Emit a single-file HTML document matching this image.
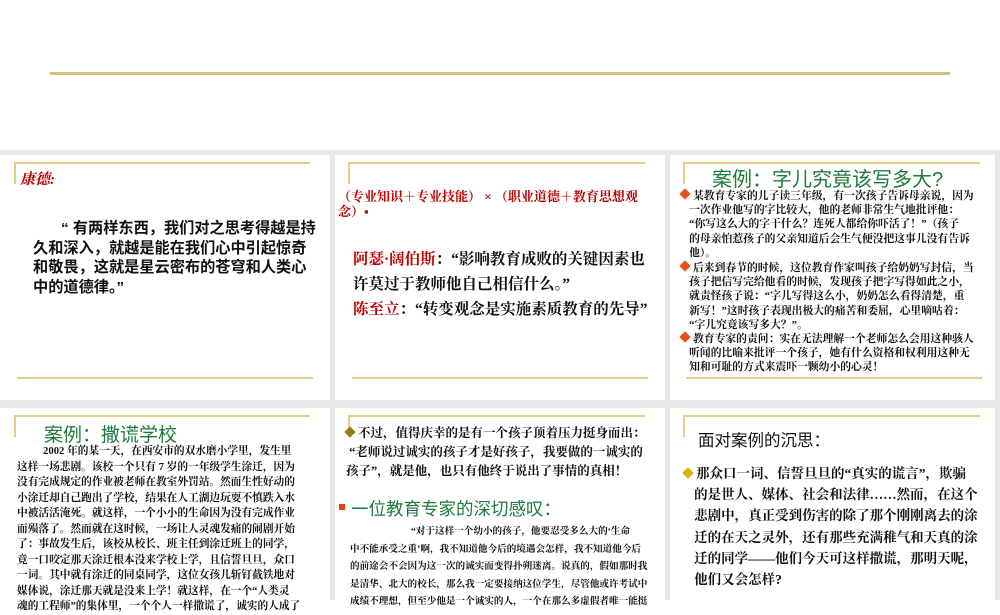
<!DOCTYPE html>
<html><head><meta charset="utf-8"><style>
*{margin:0;padding:0;box-sizing:border-box}
body{width:1000px;height:600px;position:relative;overflow:hidden;background:#fff;font-family:"Liberation Serif","Noto Serif CJK SC",serif}
.a{position:absolute;white-space:nowrap}
.gray{position:absolute;left:0;top:150px;width:1000px;height:450px;background:#e8e8e8}
.p{position:absolute;background:#fff}
.hl{position:absolute;height:2px;background:#e3cf8a}
.vl{position:absolute;width:2px;height:22px;background:#e3cf8a}
.sans{font-family:"Liberation Sans","Noto Sans CJK SC",sans-serif}
.red{color:#c00000}
.green{color:#1d7a3a}
.dia{display:inline-block;width:8px;height:8px;transform:rotate(45deg);margin-right:4px;vertical-align:1px}
</style></head><body>
<div class="a" style="left:50px;top:72px;width:900px;height:3px;background:#d9c070"></div>
<div class="gray"></div>
<div class="p" style="left:0;top:155px;width:330px;height:245px"></div>
<div class="p" style="left:335px;top:155px;width:330px;height:245px"></div>
<div class="p" style="left:670px;top:155px;width:325px;height:245px"></div>
<div class="p" style="left:0;top:408px;width:330px;height:192px"></div>
<div class="p" style="left:335px;top:408px;width:330px;height:192px"></div>
<div class="p" style="left:670px;top:408px;width:325px;height:192px"></div>

<div class="hl" style="left:14px;top:162px;width:296px"></div><div class="vl" style="left:14px;top:162px"></div>
<div class="hl" style="left:17px;top:377px;width:296px"></div>
<div class="hl" style="left:348px;top:162px;width:297px"></div><div class="vl" style="left:348px;top:162px"></div>
<div class="hl" style="left:352px;top:377px;width:296px"></div>
<div class="hl" style="left:683px;top:162px;width:297px"></div><div class="vl" style="left:683px;top:162px"></div>
<div class="hl" style="left:686px;top:377px;width:296px"></div>
<div class="hl" style="left:14px;top:415px;width:296px"></div><div class="vl" style="left:14px;top:415px"></div>
<div class="hl" style="left:348px;top:415px;width:297px"></div><div class="vl" style="left:348px;top:415px"></div>
<div class="hl" style="left:683px;top:415px;width:297px"></div><div class="vl" style="left:683px;top:415px"></div>

<!-- panel 1 -->
<div class="a red" style="left:20px;top:168px;font-size:15px;font-weight:bold;font-style:italic">康德:</div>
<div class="a sans" style="left:33px;top:219px;font-size:15.2px;font-weight:bold;line-height:19.5px;color:#111">
<span style="padding-left:28px">“ 有两样东西，我们对之思考得越是持</span><br>久和深入，就越是能在我们心中引起惊奇<br>和敬畏，这就是星云密布的苍穹和人类心<br>中的道德律。”</div>

<!-- panel 2 -->
<div class="a red" style="left:338px;top:189px;font-size:13px;font-weight:bold;line-height:15px">（专业知识＋专业技能） × （职业道德＋教育思想观<br>念）▪</div>
<div class="a" style="left:353px;top:247px;font-size:15.5px;font-weight:bold;line-height:25px;color:#111"><span class="red">阿瑟·阔伯斯</span>：“影响教育成败的关键因素也<br>许莫过于教师他自己相信什么。”<br><span class="red">陈至立</span>：“转变观念是实施素质教育的先导”</div>

<!-- panel 3 -->
<div class="a sans green" style="left:712px;top:163px;font-size:20px">案例：字儿究竟该写多大?</div>
<div class="a" style="left:681px;top:189px;font-size:10.8px;font-weight:bold;line-height:14.2px;color:#111">
<span class="dia" style="background:#e8501a"></span>某教育专家的儿子读三年级，有一次孩子告诉母亲说，因为<br>&nbsp;&nbsp;&nbsp;一次作业他写的字比较大，他的老师非常生气地批评他：<br>&nbsp;&nbsp;&nbsp;“你写这么大的字干什么？连死人都给你吓活了！”（孩子<br>&nbsp;&nbsp;&nbsp;的母亲怕惹孩子的父亲知道后会生气便没把这事儿没有告诉<br>&nbsp;&nbsp;&nbsp;他）。</div>
<div class="a" style="left:681px;top:261px;font-size:10.8px;font-weight:bold;line-height:14.2px;color:#111">
<span class="dia" style="background:#e8501a"></span>后来到春节的时候，这位教育作家叫孩子给奶奶写封信，当<br>&nbsp;&nbsp;&nbsp;孩子把信写完给他看的时候，发现孩子把字写得如此之小，<br>&nbsp;&nbsp;&nbsp;就责怪孩子说：“字儿写得这么小，奶奶怎么看得清楚，重<br>&nbsp;&nbsp;&nbsp;新写！”这时孩子表现出极大的痛苦和委屈，心里嘀咕着：<br>&nbsp;&nbsp;&nbsp;“字儿究竟该写多大？”。</div>
<div class="a" style="left:681px;top:332px;font-size:10.8px;font-weight:bold;line-height:14.2px;color:#111">
<span class="dia" style="background:#e8501a"></span>教育专家的责问：实在无法理解一个老师怎么会用这种骇人<br>&nbsp;&nbsp;&nbsp;听闻的比喻来批评一个孩子，她有什么资格和权利用这种无<br>&nbsp;&nbsp;&nbsp;知和可耻的方式来震吓一颗幼小的心灵！</div>

<!-- panel 4 -->
<div class="a sans green" style="left:44px;top:420px;font-size:19px">案例：撒谎学校</div>
<div class="a" style="left:17px;top:444px;font-size:10.7px;font-weight:bold;line-height:15.5px;color:#111">
<span style="padding-left:26px">2002 年的某一天，在西安市的双水磨小学里，发生里</span><br>这样一场悲剧。该校一个只有 7 岁的一年级学生涂迁，因为<br>没有完成规定的作业被老师在教室外罚站。然而生性好动的<br>小涂迁却自己跑出了学校，结果在人工湖边玩耍不慎跌入水<br>中被活活淹死。就这样，一个小小的生命因为没有完成作业<br>而殒落了。然而就在这时候，一场让人灵魂发痛的闹剧开始<br>了：事故发生后，该校从校长、班主任到涂迁班上的同学，<br>竟一口咬定那天涂迁根本没来学校上学，且信誓旦旦，众口<br>一词。其中就有涂迁的同桌同学，这位女孩儿斩钉截铁地对<br>媒体说，涂迁那天就是没来上学！就这样，在一个“人类灵<br>魂的工程师”的集体里，一个个人一样撒谎了，诚实的人成了</div>

<!-- panel 5 -->
<div class="a" style="left:346px;top:424px;font-size:12.5px;font-weight:bold;line-height:19px;color:#111">
<span class="dia" style="background:#9a7a14"></span>不过，值得庆幸的是有一个孩子顶着压力挺身而出：<br>&nbsp;“老师说过诚实的孩子才是好孩子，我要做的一诚实的<br>孩子”，就是他，也只有他终于说出了事情的真相！</div>
<div class="a" style="left:339px;top:504px;width:6px;height:6px;background:#e8401a"></div>
<div class="a sans green" style="left:351px;top:496px;font-size:17.5px">一位教育专家的深切感叹：</div>
<div class="a" style="left:350px;top:523px;font-size:9.6px;font-weight:bold;line-height:17.5px;color:#111">
<span style="padding-left:61px">“对于这样一个幼小的孩子，他要忍受多么大的‘生命</span><br>中不能承受之重’啊，我不知道他今后的境遇会怎样，我不知道他今后<br>的前途会不会因为这一次的诚实而变得扑朔迷离。说真的，假如那时我<br>是清华、北大的校长，那么我一定要接纳这位学生，尽管他或许考试中<br>成绩不理想，但至少他是一个诚实的人，一个在那么多虚假者唯一能挺</div>

<!-- panel 6 -->
<div class="a sans" style="left:698px;top:427px;font-size:16.5px;color:#111">面对案例的沉思：</div>
<div class="a" style="left:684px;top:463px;font-size:13.5px;font-weight:bold;line-height:21.2px;color:#111">
<span class="dia" style="background:#e2a800"></span>那众口一词、信誓旦旦的“真实的谎言”，欺骗<br>&nbsp;&nbsp;&nbsp;的是世人、媒体、社会和法律……然而，在这个<br>&nbsp;&nbsp;&nbsp;悲剧中，真正受到伤害的除了那个刚刚离去的涂<br>&nbsp;&nbsp;&nbsp;迁的在天之灵外，还有那些充满稚气和天真的涂<br>&nbsp;&nbsp;&nbsp;迁的同学——他们今天可这样撒谎，那明天呢，<br>&nbsp;&nbsp;&nbsp;他们又会怎样?</div>
</body></html>
